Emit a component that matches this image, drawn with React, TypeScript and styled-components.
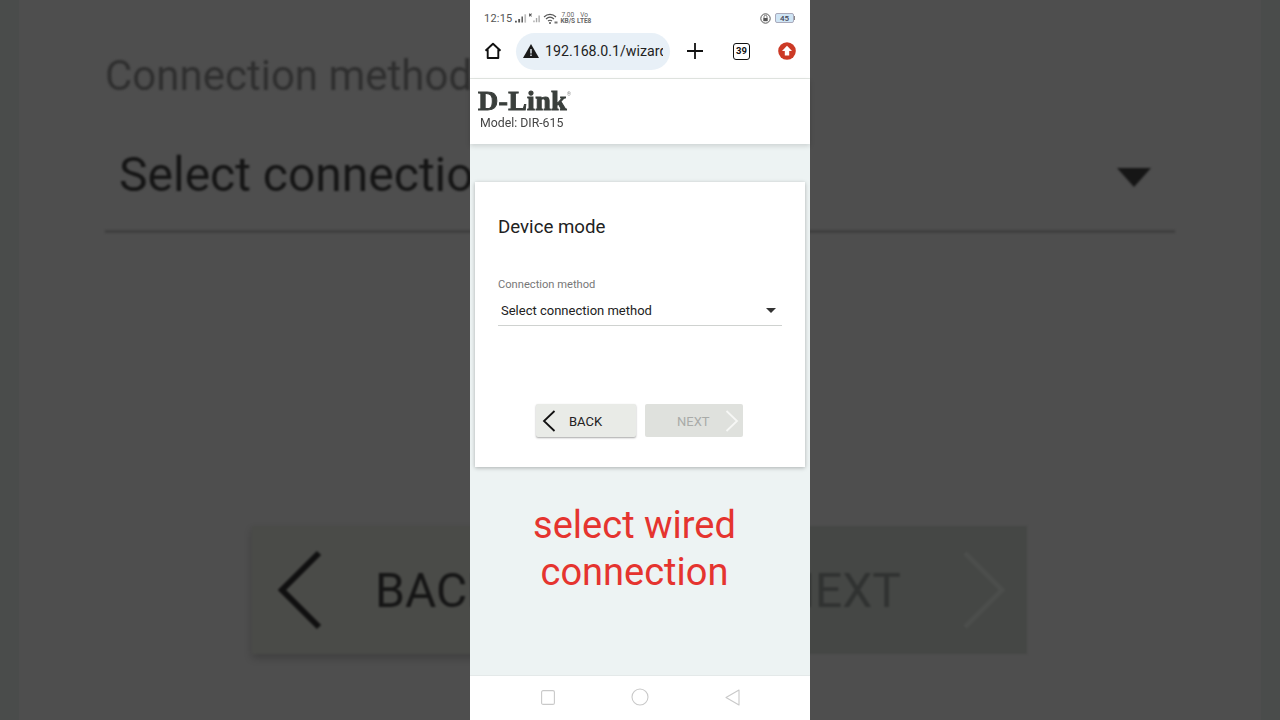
import React from 'react';
import styled, {createGlobalStyle} from 'styled-components';

const GlobalStyle = createGlobalStyle`
  html, body {
    margin: 0;
    padding: 0;
    width: 100%;
    height: 100%;
    overflow: hidden;
    background: #4e4e4e;
  }
  * {
    box-sizing: border-box;
  }
`;

const App = () => {
    return (
        <Stage>
            <GlobalStyle />

            {/* blurred, enlarged copy of the video behind the phone */}
            <Backdrop>
                <BackdropLabel>Connection method</BackdropLabel>
                <BackdropSelect>
                    <span>Select connection method</span>
                    <svg width="36" height="20" viewBox="0 0 36 20"><path d="M1 1h34L18 20z" fill="#161616" /></svg>
                </BackdropSelect>
                <BackdropButtons>
                    <BackdropButton $width={317} $pad={25}>
                        <svg width="46" height="80" viewBox="0 0 46 80"><path d="M42 3 5 40l37 37" fill="none" stroke="#101010" strokeWidth="6" /></svg>
                        <BackdropButtonText $gap={52} $color="#151515">BACK</BackdropButtonText>
                    </BackdropButton>
                    <BackdropButton $width={311} $pad={20} $end>
                        <BackdropButtonText $gap={0} $color="#303231">NEXT</BackdropButtonText>
                        <BackdropChevron width="46" height="80" viewBox="0 0 46 80"><path d="M4 3l37 37L4 77" fill="none" stroke="#4c4e4c" strokeWidth="5" /></BackdropChevron>
                    </BackdropButton>
                </BackdropButtons>
            </Backdrop>

            <Phone>
                <StatusBar>
                    <StatusLeft>
                        <Clock>12:15</Clock>
                        <svg width="12" height="10" viewBox="0 0 13 10">
                            <path d="M0 8h2v2H0zM3.5 6h2v4h-2zM7 3.5h1.6V10H7z" fill="#555" />
                            <path d="M10.2 1H12v9h-1.8z" fill="#bbb" />
                        </svg>
                        <svg width="12" height="12" viewBox="0 0 14 12">
                            <path d="M0 1l3 3M3 1 0 4" stroke="#555" strokeWidth="1.2" />
                            <path d="M5 9h1.6v2H5zM8 6h1.6v5H8zM11 3h1.6v8H11z" fill="#a8a8a8" />
                        </svg>
                        <svg width="15" height="11" viewBox="0 0 15 11">
                            <path d="M1 4c3.500-3.500 8.500-3.500 12 0M3 6c2.500-2.300 5.500-2.300 8 0M5 8c1.300-1 2.700-1 4 0" fill="none" stroke="#555" strokeWidth="1.1" />
                            <circle cx="7" cy="10" r="1" fill="#555" />
                            <path d="M11.500 8.500h3v2h-3z" fill="#777" />
                        </svg>
                        <TinyStack>
                            <span>7.00</span>
                            <b>KB/S</b>
                        </TinyStack>
                        <TinyStack>
                            <span>Vo</span>
                            <b>LTE8</b>
                        </TinyStack>
                    </StatusLeft>
                    <StatusRight>
                        <svg width="11" height="11" viewBox="0 0 11 11">
                            <circle cx="5.500" cy="5.500" r="4.700" fill="none" stroke="#555" />
                            <rect x="3.300" y="5" width="4.400" height="3.200" fill="#555" />
                            <path d="M4 5V3.800a1.500 1.500 0 0 1 3 0V5" fill="none" stroke="#555" strokeWidth=".8" />
                        </svg>
                        <Battery>45</Battery>
                        <BatteryTip />
                    </StatusRight>
                </StatusBar>

                <Toolbar>
                    <HomeButton>
                        <svg width="18" height="18" viewBox="0 0 18 18">
                            <path d="M1.500 8.800 9 1.800l7.500 7M3.700 7.500V16h10.600V7.500" fill="none" stroke="#111" strokeWidth="1.900" strokeLinejoin="round" />
                        </svg>
                    </HomeButton>
                    <UrlPill>
                        <svg width="16" height="14" viewBox="0 0 16 14">
                            <path d="M8 0l8 14H0z" fill="#1a1a1a" />
                            <path d="M7.300 5h1.400v4.500H7.300zM7.300 10.500h1.400V12H7.300z" fill="#e8f0f7" />
                        </svg>
                        <UrlText>192.168.0.1/wizard</UrlText>
                    </UrlPill>
                    <ToolbarIcons>
                        <svg width="16" height="16" viewBox="0 0 16 16"><path d="M8 0v16M0 8h16" stroke="#111" strokeWidth="1.800" /></svg>
                        <TabCount>39</TabCount>
                        <svg width="18" height="18" viewBox="0 0 18 18">
                            <circle cx="9" cy="9" r="8.800" fill="#cc3a26" />
                            <path d="M9 3.800 14 9h-2.800v4.500H6.800V9H4z" fill="#fff" />
                        </svg>
                    </ToolbarIcons>
                </Toolbar>

                <SiteHeader>
                    <Logo>D-Link<LogoMark>®</LogoMark></Logo>
                    <Model>Model: DIR-615</Model>
                </SiteHeader>

                <Page>
                    <Card>
                        <CardTitle>Device mode</CardTitle>
                        <FieldLabel>Connection method</FieldLabel>
                        <SelectRow>
                            <span>Select connection method</span>
                            <svg width="10" height="5" viewBox="0 0 10 5"><path d="M0 0h10L5 5z" fill="#333" /></svg>
                        </SelectRow>
                        <CardActions>
                            <WizardButton $width={100} $shadow>
                                <svg width="14" height="22" viewBox="0 0 14 22"><path d="M12.500 1 2 11l10.500 10" fill="none" stroke="#111" strokeWidth="1.800" /></svg>
                                <ButtonLabel $gap={13} $color="#222">BACK</ButtonLabel>
                            </WizardButton>
                            <WizardButton $width={98} $disabled>
                                <ButtonLabel $gap={26} $color="#a9aba8">NEXT</ButtonLabel>
                                <NextChevron width="14" height="22" viewBox="0 0 14 22"><path d="M1.500 1 12 11 1.500 21" fill="none" stroke="#f6f7f5" strokeWidth="1.800" /></NextChevron>
                            </WizardButton>
                        </CardActions>
                    </Card>
                    <Caption>select wired<br />connection</Caption>
                </Page>

                <NavBar>
                    <svg width="14" height="15" viewBox="0 0 14 15"><rect x=".6" y=".6" width="12.800" height="13.800" rx="1.500" fill="none" stroke="#c9c9c9" strokeWidth="1.100" /></svg>
                    <svg width="18" height="18" viewBox="0 0 18 18"><circle cx="9" cy="9" r="8" fill="none" stroke="#c9c9c9" strokeWidth="1.100" /></svg>
                    <svg width="15" height="17" viewBox="0 0 15 17"><path d="M14 1v15L1 8.500z" fill="none" stroke="#c9c9c9" strokeWidth="1.100" strokeLinejoin="round" /></svg>
                </NavBar>
            </Phone>
        </Stage>
    );
};

const Stage = styled.div`
  position: relative;
  width: 1280px;
  height: 720px;
  overflow: hidden;
  display: flex;
  justify-content: center;
  font-family: Roboto, "Liberation Sans", sans-serif;
`;

const Backdrop = styled.div`
  position: absolute;
  inset: 0;
  display: flex;
  flex-direction: column;
  padding: 0 86px;
  background: #4e4e4e;
  border-left: 19px solid #4a4c4b;
  border-right: 19px solid #4a4c4b;
`;

const BackdropLabel = styled.div`
  margin-top: 53px;
  height: 46px;
  line-height: 46px;
  font-size: 42px;
  color: #2f2f2f;
  white-space: nowrap;
  filter: blur(0.8px);
`;

const BackdropSelect = styled.div`
  height: 134px;
  padding: 51px 23px 0 14px;
  display: flex;
  justify-content: space-between;
  font-size: 48px;
  line-height: 50px;
  color: #151515;
  border-bottom: 3px solid #3f3f3f;
  filter: blur(0.8px);

  svg {
    margin-top: 17px;
  }
`;

const BackdropButtons = styled.div`
  margin-top: 293px;
  padding: 0 148px 0 147px;
  display: flex;
  justify-content: space-between;
`;

const BackdropButton = styled.div<{$width: number; $pad: number; $end?: boolean}>`
  width: ${p => p.$width}px;
  height: 128px;
  display: flex;
  align-items: center;
  justify-content: ${p => (p.$end ? 'flex-end' : 'flex-start')};
  padding: 0 ${p => p.$pad}px;
  background: ${p => (p.$end ? '#454745' : '#4a4b48')};
  box-shadow: ${p => (p.$end ? 'none' : '0 4px 8px rgba(0, 0, 0, 0.2)')};
  filter: blur(0.8px);
`;

const BackdropButtonText = styled.span<{$gap: number; $color: string}>`
  margin-left: ${p => p.$gap}px;
  font-size: 48px;
  color: ${p => p.$color};
`;

const BackdropChevron = styled.svg`
  flex: none;
  margin-left: 60px;
`;

const Phone = styled.div`
  position: relative;
  width: 340px;
  height: 720px;
  display: flex;
  flex-direction: column;
  background: #fff;
  filter: blur(0.35px);
`;

const StatusBar = styled.div`
  height: 32px;
  padding: 4px 15px 0 14px;
  display: flex;
  align-items: center;
  justify-content: space-between;
`;

const StatusLeft = styled.div`
  display: flex;
  align-items: center;
  gap: 2px;
`;

const Clock = styled.span`
  margin-right: 1px;
  font-size: 11px;
  color: #555;
  letter-spacing: 0.2px;
`;

const TinyStack = styled.div`
  display: flex;
  flex-direction: column;
  align-items: center;
  font-size: 6.500px;
  line-height: 6px;
  color: #666;

  b {
    font-weight: 700;
  }
`;

const StatusRight = styled.div`
  display: flex;
  align-items: center;
  gap: 4px;
`;

const Battery = styled.div`
  width: 19px;
  height: 10px;
  line-height: 9px;
  text-align: center;
  font-size: 8px;
  font-weight: 500;
  color: #445;
  background: #cfe5f5;
  border: 1px solid #aab;
  border-radius: 2px;
`;

const BatteryTip = styled.div`
  width: 1px;
  height: 4px;
  margin-left: -4px;
  background: #888;
`;

const Toolbar = styled.div`
  height: 47px;
  padding: 0 14px 8px 14px;
  display: flex;
  align-items: center;
  border-bottom: 1px solid #e4e8e4;
`;

const HomeButton = styled.div`
  width: 32px;
  display: flex;
`;

const UrlPill = styled.div`
  width: 154px;
  height: 37px;
  padding: 0 7px;
  display: flex;
  align-items: center;
  gap: 6px;
  border-radius: 19px;
  background: #e8f0f7;
`;

const UrlText = styled.span`
  flex: 1;
  overflow: hidden;
  white-space: nowrap;
  font-size: 14.200px;
  color: #222;
`;

const ToolbarIcons = styled.div`
  flex: 1;
  padding: 0 0 0 17px;
  display: flex;
  align-items: center;
  justify-content: space-between;
`;

const TabCount = styled.div`
  width: 17px;
  height: 17px;
  margin-left: 2px;
  line-height: 14px;
  text-align: center;
  font-size: 9.500px;
  font-weight: 700;
  color: #111;
  border: 1.500px solid #111;
  border-radius: 3px;
`;

const SiteHeader = styled.div`
  position: relative;
  height: 65px;
  padding: 11px 0 0 8px;
  background: #fff;
  box-shadow: 0 2px 5px rgba(0, 0, 0, 0.14);
`;

const Logo = styled.div`
  display: flex;
  height: 22px;
  line-height: 22px;
  font-family: "Liberation Serif", serif;
  font-size: 28px;
  font-weight: 700;
  letter-spacing: 0.3px;
  color: #3a3f3c;
  -webkit-text-stroke: 1px #3a3f3c;
`;

const LogoMark = styled.span`
  font-family: Roboto, sans-serif;
  font-size: 5px;
  line-height: 8px;
  font-weight: 400;
  color: #888;
  -webkit-text-stroke: 0;
`;

const Model = styled.div`
  margin: 4px 0 0 2px;
  font-size: 12.300px;
  line-height: 15px;
  color: #444;
`;

const Page = styled.div`
  flex: 1;
  padding: 38px 5px 0 5px;
  background: #edf3f3;
  display: flex;
  flex-direction: column;
`;

const Card = styled.div`
  height: 285px;
  padding: 34px 23px 0 23px;
  display: flex;
  flex-direction: column;
  background: #fff;
  box-shadow: 0 1px 4px rgba(0, 0, 0, 0.28);
`;

const CardTitle = styled.div`
  font-size: 18.700px;
  line-height: 22px;
  color: #222;
`;

const FieldLabel = styled.div`
  margin-top: 40px;
  font-size: 11.150px;
  line-height: 14px;
  color: #777;
`;

const SelectRow = styled.div`
  height: 34px;
  padding: 3px 6px 0 3px;
  display: flex;
  align-items: center;
  justify-content: space-between;
  font-size: 13px;
  color: #222;
  border-bottom: 1px solid #cfd2d0;
`;

const CardActions = styled.div`
  margin-top: 78px;
  padding-left: 38px;
  display: flex;
  gap: 9px;
`;

const WizardButton = styled.div<{$width: number; $shadow?: boolean; $disabled?: boolean}>`
  width: ${p => p.$width}px;
  height: 33px;
  padding: 1px 0 0 6px;
  display: flex;
  align-items: center;
  border-radius: 2px;
  background: ${p => (p.$disabled ? '#dfe1dd' : '#e9ebe7')};
  box-shadow: ${p => (p.$shadow ? '0 1px 2px rgba(0, 0, 0, 0.35)' : 'none')};
`;

const ButtonLabel = styled.span<{$gap: number; $color: string}>`
  margin-left: ${p => p.$gap}px;
  font-size: 13px;
  color: ${p => p.$color};
`;

const NextChevron = styled.svg`
  flex: none;
  margin-left: 15px;
`;

const Caption = styled.div`
  margin: 35px 11px 0 0;
  text-align: center;
  font-size: 38px;
  line-height: 47px;
  color: #e5342f;
`;

const NavBar = styled.div`
  height: 45px;
  padding: 0 70px 2px 71px;
  display: flex;
  align-items: center;
  justify-content: space-between;
  border-top: 1px solid #e4e9e9;
  background: #fff;
`;

export default App;
